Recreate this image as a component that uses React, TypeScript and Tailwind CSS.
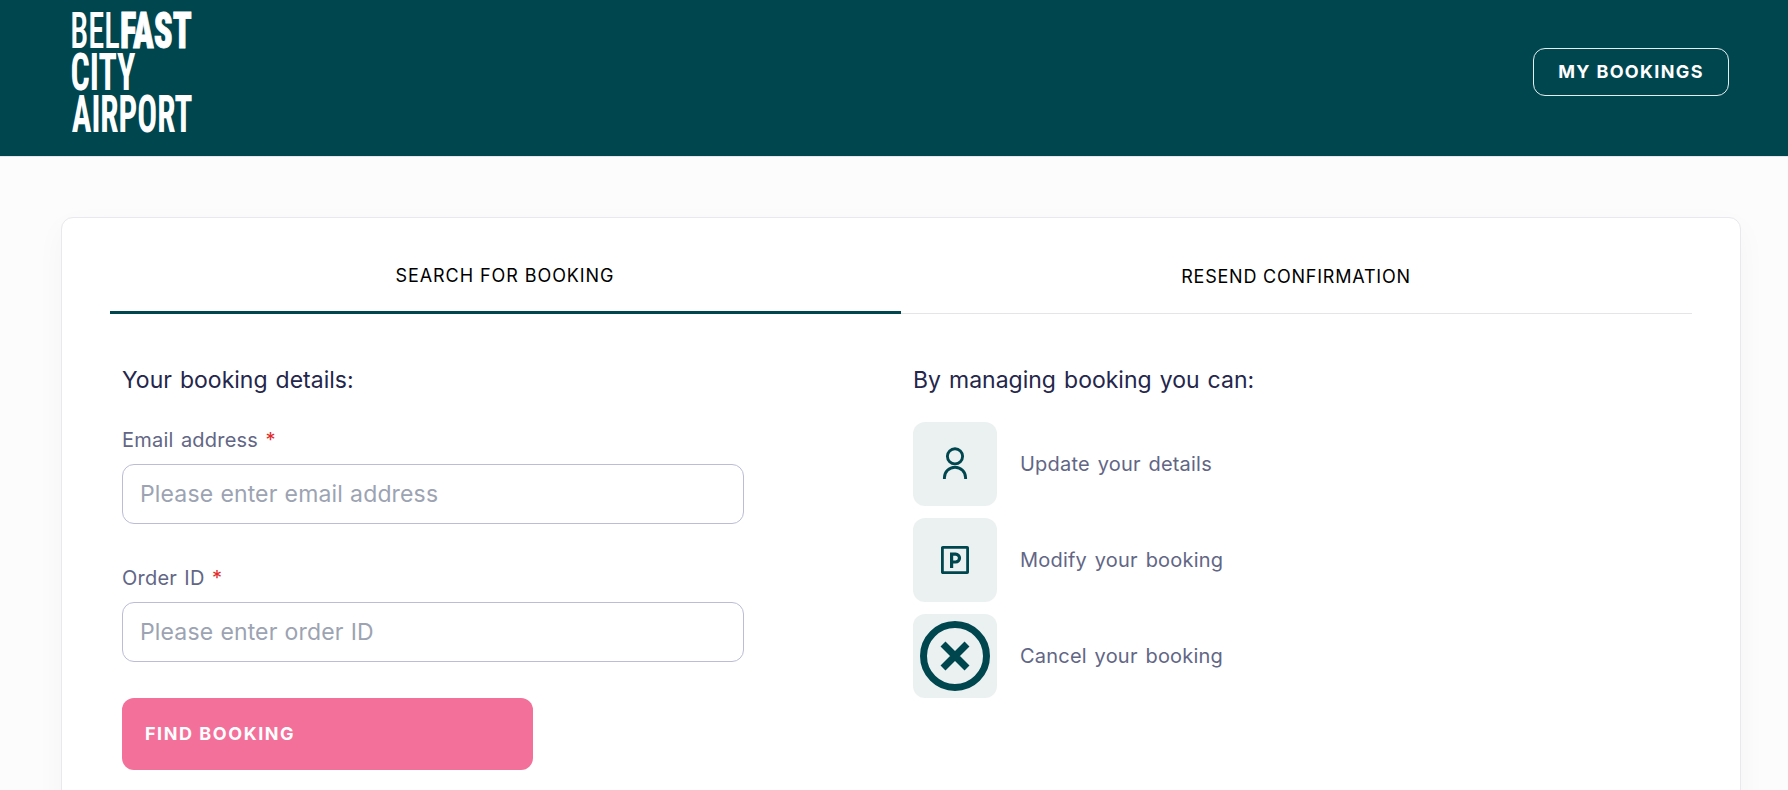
import { useState } from "react";
import type { ReactNode } from "react";

type Tab = "search" | "resend";

function Logo() {
  return (
    <svg
      width="140"
      height="144"
      viewBox="-10 -10 140 144"
      fill="#fff"
      className="overflow-visible font-['Roboto_Condensed','Roboto',sans-serif] [font-stretch:75%]"
    >
      <text x="-1.8" y="35.7" fontSize="50" fontWeight="500" textLength="49.5" lengthAdjust="spacingAndGlyphs">
        BEL
      </text>
      <text x="48" y="35.5" fontSize="49.5" fontWeight="900" stroke="#fff" strokeWidth="0.9" textLength="71.8" lengthAdjust="spacingAndGlyphs">
        FAST
      </text>
      <text x="-1.5" y="77.7" fontSize="51" fontWeight="700" textLength="65" lengthAdjust="spacingAndGlyphs">
        CITY
      </text>
      <text x="-0.3" y="119.7" fontSize="51" fontWeight="700" textLength="120.8" lengthAdjust="spacingAndGlyphs">
        AIRPORT
      </text>
    </svg>
  );
}

function PersonIcon() {
  return (
    <svg width="28" height="36" viewBox="0 0 28 36" fill="none" stroke="#00464f" strokeWidth="2.9">
      <circle cx="14" cy="10.3" r="7.6" />
      <path d="M3.4 33v-1.2a10.6 10.6 0 0 1 21.2 0V33" />
    </svg>
  );
}

function ParkingIcon() {
  return (
    <svg width="28" height="28" viewBox="0 0 28 28" fill="none" stroke="#00464f">
      <rect x="1.4" y="1.4" width="25.2" height="25.2" rx="0.4" strokeWidth="2.8" />
      <path d="M10.6 22V8.2h4a3.9 3.9 0 0 1 0 7.8h-4" strokeWidth="3.2" />
    </svg>
  );
}

function CancelIcon() {
  return (
    <svg width="70" height="70" viewBox="0 0 70 70" fill="none" stroke="#00464f" strokeWidth="7">
      <circle cx="35" cy="35" r="31.5" />
      <path d="M23 23l24 24M47 23L23 47" />
    </svg>
  );
}

interface FieldProps {
  id: string;
  label: string;
  placeholder: string;
}

function Field({ id, label, placeholder }: FieldProps) {
  const [value, setValue] = useState("");

  return (
    <div>
      <label
        htmlFor={id}
        className="block h-[30px] text-[20px] leading-[30px] font-[390] tracking-[0.22px] text-[#626685] [word-spacing:1.5px]"
      >
        {label} <span className="text-[#e02b2b]">*</span>
      </label>
      <input
        id={id}
        value={value}
        onChange={(e) => setValue(e.target.value)}
        placeholder={placeholder}
        className="mt-[9px] block h-[60px] w-[622px] rounded-xl border border-[#babdd3] bg-white px-[17px] text-[23px] font-[390] tracking-[0.15px] text-[#2b2d52] [word-spacing:0.5px] placeholder:text-[#9ca3b2] focus:outline-none focus:ring-2 focus:ring-[#00464f]"
      />
    </div>
  );
}

function Feature({ icon, children }: { icon: ReactNode; children: ReactNode }) {
  return (
    <li className="flex items-center gap-[23px]">
      <span className="flex size-21 items-center justify-center rounded-xl bg-[#ebf1f1]">
        {icon}
      </span>
      <span className="text-[20px] leading-[30px] font-[390] tracking-[0.2px] text-[#626685] [word-spacing:2px]">
        {children}
      </span>
    </li>
  );
}

export default function App() {
  const [tab, setTab] = useState<Tab>("search");

  const tabClass = (name: Tab) =>
    tab === name
      ? "flex-1 border-b-[3px] border-[#00464f] pr-px tracking-[0.93px]"
      : "flex-1 border-b border-[#e5e5e8] pr-px tracking-[0.78px]";

  return (
    <div className="h-screen overflow-hidden bg-[#fcfcfc] font-['Inter','Liberation_Sans',sans-serif]">
      {/* Header */}
      <header className="flex h-[157px] items-start justify-between border-b border-[#e6e7ec] bg-[#00464f] pr-[59px] pl-[62px]">
        <div className="pt-0.5">
          <Logo />
        </div>
        <button
          type="button"
          className="mt-12 h-12 w-[196px] rounded-xl border border-white/90 pb-[2px] text-[18px] font-bold tracking-[1.35px] text-white"
        >
          MY BOOKINGS
        </button>
      </header>

      {/* Booking card */}
      <main className="pt-[60px] pr-[47px] pl-[61px]">
        <div className="h-[700px] rounded-xl border border-[#e8e8ee] bg-white px-12 pt-[22px] shadow-[0_10px_30px_rgba(20,20,60,0.035)]">
          <div className="flex h-[74px] text-[18px] font-[380] text-black">
            <button type="button" onClick={() => setTab("search")} className={tabClass("search")}>
              SEARCH FOR BOOKING
            </button>
            <button type="button" onClick={() => setTab("resend")} className={tabClass("resend")}>
              RESEND CONFIRMATION
            </button>
          </div>

          <div className="grid grid-cols-2 pt-12">
            <form className="px-3" onSubmit={(e) => e.preventDefault()}>
              <h2 className="mb-[26px] h-[37px] text-[23px] leading-[37px] font-[380] text-[#24264b] [word-spacing:1.6px]">
                Your booking details:
              </h2>
              <div className="space-y-[39px]">
                <Field id="email" label="Email address" placeholder="Please enter email address" />
                <Field id="order" label="Order ID" placeholder="Please enter order ID" />
              </div>
              <button
                type="submit"
                className="mt-9 block h-18 w-[411px] rounded-xl bg-[#f3709b] pb-[2px] pl-[23px] text-left text-[18px] font-bold tracking-[1.55px] text-white"
              >
                FIND BOOKING
              </button>
            </form>

            <section className="px-3">
              <h2 className="mb-[23px] h-[37px] text-[23px] leading-[37px] font-[380] text-[#24264b] [word-spacing:1.6px]">
                By managing booking you can:
              </h2>
              <ul className="space-y-3">
                <Feature icon={<PersonIcon />}>Update your details</Feature>
                <Feature icon={<ParkingIcon />}>Modify your booking</Feature>
                <Feature icon={<CancelIcon />}>Cancel your booking</Feature>
              </ul>
            </section>
          </div>
        </div>
      </main>
    </div>
  );
}
